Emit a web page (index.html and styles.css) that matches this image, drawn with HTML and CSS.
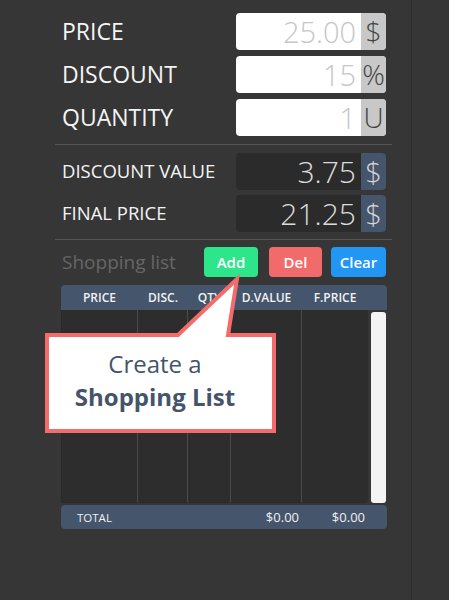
FILE: index.html
```html
<!DOCTYPE html>
<html>
<head>
<meta charset="utf-8">
<link rel="stylesheet" href="styles.css">
</head>
<body>
<div class="app">
  <main class="panel">
    <section class="group">
      <div class="row">
        <span class="label">PRICE</span>
        <div class="field field-light"><span class="val">25.00</span><span class="unit">$</span></div>
      </div>
      <div class="row">
        <span class="label">DISCOUNT</span>
        <div class="field field-light"><span class="val">15</span><span class="unit">%</span></div>
      </div>
      <div class="row">
        <span class="label">QUANTITY</span>
        <div class="field field-light"><span class="val">1</span><span class="unit">U</span></div>
      </div>
    </section>
    <div class="sep"></div>
    <section class="group group-results">
      <div class="row">
        <span class="label label-small">DISCOUNT VALUE</span>
        <div class="field field-dark"><span class="val">3.75</span><span class="unit">$</span></div>
      </div>
      <div class="row">
        <span class="label label-small">FINAL PRICE</span>
        <div class="field field-dark"><span class="val">21.25</span><span class="unit">$</span></div>
      </div>
    </section>
    <div class="sep sep-2"></div>
    <div class="list-bar">
      <span class="list-title">Shopping list</span>
      <button class="btn btn-add">Add</button>
      <button class="btn btn-del">Del</button>
      <button class="btn btn-clear">Clear</button>
    </div>
    <div class="table">
      <div class="thead cols">
        <span>PRICE</span><span>DISC.</span><span>QTY</span><span>D.VALUE</span><span>F.PRICE</span><span></span>
      </div>
      <div class="tbody cols">
        <div class="col"></div><div class="col"></div><div class="col"></div><div class="col"></div><div class="col col-last"></div>
        <div class="scroll-cell"><div class="scrollbar"></div></div>
      </div>
      <div class="tfoot cols">
        <span class="total-label">TOTAL</span><span></span><span></span><span class="num">$0.00</span><span class="num">$0.00</span><span></span>
      </div>
    </div>
  </main>
  <div class="callout">
    <svg class="callout-shape" width="240" height="172" viewBox="0 0 240 172">
      <path d="M7 69 L138 69 L197 13 L188 69 L234 69 L234 165 L7 165 Z" fill="#ffffff" stroke="#f36b6b" stroke-width="4" stroke-linejoin="miter"/>
    </svg>
    <div class="callout-text">
      <div>Create a</div>
      <div class="strong">Shopping List</div>
    </div>
  </div>
</div>
</body>
</html>
```

FILE: styles.css
```css
* { box-sizing: border-box; }
html, body {
  margin: 0;
  padding: 0;
  background: #363636;
  font-family: "Open Sans", "Liberation Sans", sans-serif;
}
.app {
  position: relative;
  width: 449px;
  height: 600px;
  overflow: hidden;
}
.panel {
  width: 412px;
  height: 600px;
  border-right: 1px solid #2c2c2c;
  padding: 13px 0 0 55px;
}
.group {
  width: 337px;
  display: flex;
  flex-direction: column;
  gap: 6px;
}
.group-results {
  margin-top: 8px;
  gap: 5px;
}
.row {
  height: 37px;
  display: flex;
  align-items: center;
  justify-content: space-between;
  padding: 0 6px 0 7px;
}
.label {
  color: #f4f4f4;
  font-size: 23px;
  line-height: 1.2;
}
.label-small {
  font-size: 18.5px;
}
.field {
  width: 150px;
  height: 37px;
  display: flex;
  align-items: stretch;
  border-radius: 4px;
}
.val {
  flex: 1;
  text-align: right;
  padding-right: 5px;
  font-weight: 300;
  font-size: 29px;
  line-height: 37px;
  white-space: nowrap;
}
.unit {
  width: 25px;
  text-align: center;
  font-weight: 300;
  font-size: 28px;
  line-height: 37px;
  border-radius: 0 4px 4px 0;
}
.field-light { background: #ffffff; }
.field-light .val { color: #c6c6c6; }
.field-light .unit { background: #c8c8c8; color: #444444; }
.field-dark { background: #2b2b2b; }
.field-dark .val { color: #dcdcdc; font-size: 30px; }
.field-dark .unit { background: #45556b; color: #d6d6d6; font-size: 29px; }
.sep {
  width: 337px;
  height: 1px;
  background: #545454;
  margin-top: 8px;
}
.sep-2 { margin-top: 7px; }
.list-bar {
  width: 337px;
  margin-top: 7px;
  height: 30px;
  display: flex;
  align-items: center;
  padding: 0 6px 0 7px;
}
.list-title {
  flex: 1;
  color: #666666;
  font-size: 19px;
}
.btn {
  height: 30px;
  border: none;
  border-radius: 4px;
  color: #ffffff;
  font-family: "Open Sans", "Liberation Sans", sans-serif;
  font-weight: 600;
  font-size: 15px;
  padding: 0;
}
.btn-add { width: 54px; background: #2de68c; }
.btn-del { width: 53px; background: #f26b6b; margin-left: 11px; }
.btn-clear { width: 55px; background: #2196f3; margin-left: 9px; }
.table {
  margin: 8px 0 0 6px;
  width: 326px;
}
.cols {
  display: grid;
  grid-template-columns: 77px 50px 43px 71px 66px 1fr;
}
.thead {
  height: 25px;
  background: #45556b;
  border-radius: 4px 4px 0 0;
  color: #f2f2f2;
  font-size: 12px;
  font-weight: 600;
  align-items: center;
  text-align: center;
}
.tbody {
  height: 193px;
}
.col {
  background: #2d2d2d;
  border-right: 1px solid #4b4b4b;
  border-bottom: 1px solid #2a2a2a;
}
.col:first-child { border-left: 1px solid #2a2a2a; border-bottom-left-radius: 3px; }
.col-last {
  border-right: none;
  border-bottom-right-radius: 3px;
}
.scroll-cell {
  padding: 2px 1px 0 3px;
}
.scrollbar {
  height: 100%;
  background: #f4f4f4;
  border-radius: 3px;
}
.tfoot {
  margin-top: 2px;
  height: 24px;
  background: #45556b;
  border-radius: 4px;
  color: #f0f0f0;
  align-items: center;
}
.total-label {
  font-size: 11.5px;
  padding-left: 16px;
}
.num {
  font-size: 13px;
  text-align: right;
  padding-right: 3px;
}
.callout {
  position: absolute;
  left: 40px;
  top: 266px;
  width: 240px;
  height: 172px;
}
.callout-shape {
  position: absolute;
  left: 0;
  top: 0;
}
.callout-text {
  position: relative;
  margin-top: 81px;
  width: 230px;
  text-align: center;
  color: #44546a;
  font-size: 24px;
  line-height: 33px;
}
.strong { font-weight: 700; }
```
